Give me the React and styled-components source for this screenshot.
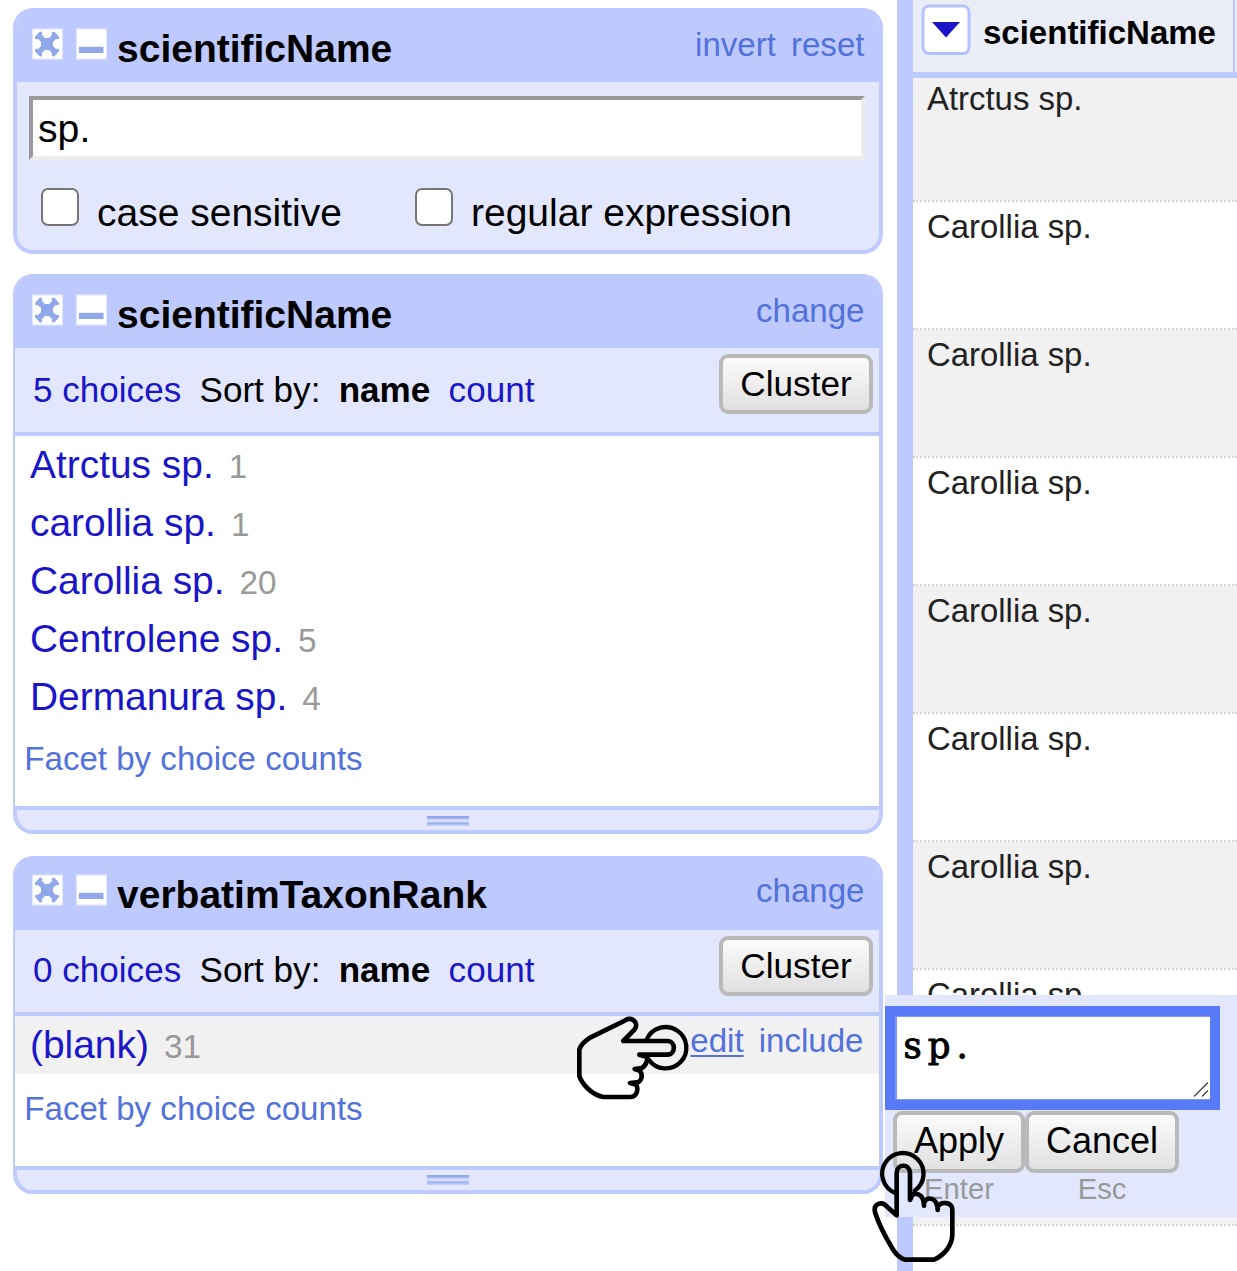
import React from "react";
import styled, { createGlobalStyle } from "styled-components";

const c = {
  frame: "#bec9fe",
  pale: "#e2e7fe",
  link: "#1a16c8",
  soft: "#5272da",
  stripe: "#f1f1f1",
};

const GlobalStyle = createGlobalStyle`
  * { box-sizing: border-box; }
  html, body { margin: 0; padding: 0; background: #fff; }
  body { font-family: "Liberation Sans", Arial, sans-serif; color: #000; overflow: hidden; }
`;

const Page = styled.div`
  position: relative;
  display: flex;
  width: 1237px;
  height: 1271px;
  overflow: hidden;
  white-space: nowrap;
`;

const Sidebar = styled.aside`
  flex: none;
  width: 897px;
  padding: 8px 0 0 13px;
  display: flex;
  flex-direction: column;
`;

const Panel = styled.section`
  width: 870px;
  height: ${(p) => p.$height}px;
  margin-bottom: ${(p) => p.$gap}px;
  display: flex;
  flex-direction: column;
  border: solid ${c.frame};
  border-width: 0 4px 4px ${(p) => (p.$list ? 2 : 4)}px;
  border-radius: 20px;
  background: ${c.pale};
  overflow: hidden;
`;

const PanelHeader = styled.header`
  flex: none;
  height: 74px;
  padding: 0 14.5px 0 ${(p) => (p.$list ? 17 : 15)}px;
  margin-top: ${(p) => -p.$lift}px;
  border-bottom: 0 solid ${c.frame};
  border-bottom-width: ${(p) => p.$lift}px;
  box-sizing: content-box;
  background: ${c.frame};
  display: flex;
  align-items: flex-start;
`;

const HeaderIcon = styled.svg`
  width: 32px;
  height: 32px;
  margin: 20px 12px 0 0;
  flex: none;
`;

const Title = styled.h2`
  margin: 0 auto 0 -3px;
  font-size: 39px;
  font-weight: bold;
  line-height: 81px;
`;

const SoftLink = styled.a`
  color: ${c.soft};
  font-size: 33.1px;
  line-height: ${(p) => p.$line || 73}px;
  margin-left: 15px;
  text-decoration: ${(p) => (p.$underline ? "underline" : "none")};
  text-decoration-thickness: 2px;
  text-underline-offset: 3px;
`;

const SearchBody = styled.div`
  padding: 14px 14px 0 12px;
`;

const SearchInput = styled.input`
  display: block;
  width: 836px;
  height: 64px;
  padding: 1px 5px 0;
  border: 4px solid;
  border-color: #999 #ececec #ececec #999;
  border-radius: 0;
  outline: none;
  background: #fff;
  font: 39.2px "Liberation Sans", Arial, sans-serif;
`;

const Options = styled.div`
  display: grid;
  grid-template-columns: 374px auto;
  padding: 24px 0 0 12px;
`;

const Option = styled.label`
  display: flex;
  align-items: flex-start;
  gap: 18px;
  font-size: 39px;
  line-height: 57px;
`;

const Check = styled.input`
  appearance: none;
  width: 38px;
  height: 38px;
  margin: 4px 0 0;
  border: 2px solid #767676;
  border-radius: 7px;
  background: #fff;
`;

const Summary = styled.div`
  flex: none;
  height: ${(p) => p.$height}px;
  border-bottom: 4px solid ${c.frame};
  padding: 0 6px 0 18px;
  display: flex;
  align-items: flex-start;
  gap: 18.3px;
  font-size: 35.1px;
  line-height: ${(p) => p.$line}px;
`;

const BlueLink = styled.a`
  color: ${c.link};
`;

const Choices = styled.div`
  flex: 1;
  background: #fff;
`;

const Choice = styled.div`
  height: 58px;
  padding: 0 15.5px 0 15px;
  display: flex;
  align-items: baseline;
  line-height: 57px;
  font-size: 38.9px;
  background: ${(p) => (p.$hover ? c.stripe : "transparent")};
`;

const Count = styled.span`
  margin: 0 auto 0 15px;
  font-size: 33.3px;
  color: #999;
`;

const ChoiceActions = styled.span`
  align-self: flex-start;
  display: flex;
`;

const FacetLink = styled.a`
  display: block;
  padding-left: 9.3px;
  color: ${c.soft};
  font-size: 33.1px;
  line-height: ${(p) => p.$line}px;
`;

const GripBar = styled.div`
  flex: none;
  height: 24px;
  border-top: 4px solid ${c.frame};
  border-left: 2px solid ${c.frame};
  border-bottom-left-radius: 18px;
  background: ${c.pale};
  padding: ${(p) => p.$top}px 0 0 410px;
`;

const Grip = styled.div`
  width: 42px;
  height: 10px;
  background: linear-gradient(#90a8ec 0 2px, #b6c4f5 3px, #d9e0fc 4px, #d2dafa 6px, #90a8ec 7px, #a9baf2 8px, #cdd8fb 10px);
`;

const Button = styled.button`
  flex: none;
  width: ${(p) => p.$width}px;
  height: ${(p) => p.$height}px;
  margin: ${(p) => p.$margin || "0"};
  padding: 0 0 ${(p) => p.$raise || 0}px;
  border: 4px solid #b9b9b9;
  border-radius: 9px;
  background: linear-gradient(#fbfbfb, #e0e0e0);
  color: #000;
  font: ${(p) => p.$size || 36}px "Liberation Sans", Arial, sans-serif;
  line-height: 52px;
  text-align: center;
`;

const Divider = styled.div`
  flex: none;
  width: 16px;
  background: ${c.frame};
`;

const Grid = styled.main`
  flex: 1;
  min-width: 0;
`;

const GridHeader = styled.div`
  height: 78px;
  border-bottom: 6px solid ${c.frame};
  background: #eaedf6;
  display: flex;
`;

const ColumnHeader = styled.div`
  width: 322px;
  padding-left: 8px;
  border-right: 2px solid ${c.frame};
  display: flex;
  gap: 12px;
  font-size: 33px;
  font-weight: bold;
  line-height: 65px;
`;

const MenuIcon = styled.svg`
  width: 50px;
  height: 52px;
  margin-top: 4px;
`;

const GridRow = styled.div`
  height: ${(p) => (p.$first ? 124 : 128)}px;
  border-bottom: 2px dotted #d3d3d3;
  padding-left: 14px;
  background: ${(p) => (p.$odd ? c.stripe : "#fff")};
  background-clip: padding-box;
  color: #222;
  font-size: 32.9px;
  line-height: ${(p) => (p.$first ? 41 : 49)}px;
`;

const EditPopup = styled.div`
  position: absolute;
  left: 885px;
  top: 995px;
  width: 352px;
  height: 222px;
  padding-top: 11px;
  background: ${c.pale};
`;

const EditField = styled.div`
  width: 335px;
  height: 104px;
  padding: 10px;
  background: #587af7;
  display: flex;
`;

const EditText = styled.div`
  flex: 1;
  border: 1px solid #7d98f9;
  border-left-width: 2px;
  border-right: 0;
  background: #fff;
  padding: 0 0 0 6.5px;
  display: flex;
  align-items: flex-end;
  font-family: "DejaVu Serif", "Liberation Mono", monospace;
  font-size: 35.5px;
  letter-spacing: 6px;
  line-height: 58px;
  -webkit-text-stroke: 1px #000;
`;

const EditValue = styled.span`
  align-self: flex-start;
  margin-right: auto;
`;

const ResizeHandle = styled.svg`
  width: 17px;
  height: 17px;
  flex: none;
`;

const EditButtons = styled.div`
  display: flex;
  padding: 1px 0 0 8px;
`;

const KeyedButton = styled.div`
  display: flex;
  flex-direction: column;
  align-items: center;
`;

const KeyHint = styled.span`
  color: #999;
  font-size: 29.2px;
  line-height: 33px;
`;

const Pointer = styled.svg`
  position: absolute;
  left: ${(p) => p.$x}px;
  top: ${(p) => p.$y}px;
  fill: none;
  stroke: #000;
  stroke-width: 14;
  stroke-linejoin: round;
  stroke-linecap: round;
`;

function RemoveIcon() {
  return (
    <HeaderIcon viewBox="0 0 32 32">
      <rect x="0" y="0.5" width="31" height="31" fill="#e0e7ff" />
      <rect x="1" y="1.5" width="29" height="29" fill="#fff" />
      <path d="M7 8L23 24M23 8L7 24" stroke="#90a8ea" strokeWidth="5.6" />
      <path d="M4.6 9.6L8.6 5.2M21.4 5.2L25.4 9.6M4.6 22.4L8.6 26.8M21.4 26.8L25.4 22.4" stroke="#90a8ea" strokeWidth="3.4" strokeLinecap="round" />
      <rect x="9" y="10" width="12" height="12" rx="1.5" fill="#90a8ea" />
    </HeaderIcon>
  );
}

function MinimizeIcon() {
  return (
    <HeaderIcon viewBox="0 0 32 32">
      <rect x="0" y="0.5" width="31" height="31" fill="#e0e7ff" />
      <rect x="1" y="1.5" width="29" height="29" fill="#fff" />
      <rect x="3" y="18.8" width="24.5" height="6.2" fill="#90a8ea" />
    </HeaderIcon>
  );
}

function Header({ title, links, list, lift = 0 }) {
  return (
    <PanelHeader $list={list} $lift={lift}>
      <RemoveIcon />
      <MinimizeIcon />
      <Title>{title}</Title>
      {links.map((l) => (
        <SoftLink key={l}>{l}</SoftLink>
      ))}
    </PanelHeader>
  );
}

function ListFacet({ title, height, gap, lift, summaryHeight, summaryLine, total, choices, facetLine, gripTop }) {
  return (
    <Panel $list $height={height} $gap={gap}>
      <Header title={title} links={["change"]} list lift={lift} />
      <Summary $height={summaryHeight} $line={summaryLine}>
        <BlueLink>{total} choices</BlueLink>
        <span>Sort by:</span>
        <b>name</b>
        <BlueLink>count</BlueLink>
        <Button $width={154} $height={60} $size={35.2} $margin="6px 0 0 auto">Cluster</Button>
      </Summary>
      <Choices>
        {choices.map(([name, count, hover]) => (
          <Choice key={name} $hover={hover}>
            <BlueLink>{name}</BlueLink>
            <Count>{count}</Count>
            {hover && (
              <ChoiceActions>
                <SoftLink $line={49} $underline>edit</SoftLink>
                <SoftLink $line={49}>include</SoftLink>
              </ChoiceActions>
            )}
          </Choice>
        ))}
        <FacetLink $line={facetLine}>Facet by choice counts</FacetLink>
      </Choices>
      <GripBar $top={gripTop}>
        <Grip />
      </GripBar>
    </Panel>
  );
}

const rows = ["Atrctus sp.", ...Array(7).fill("Carollia sp."), "", ""];

export default function App() {
  return (
    <Page>
      <GlobalStyle />
      <Sidebar>
        <Panel $height={246} $gap={20}>
          <Header title="scientificName" links={["invert", "reset"]} />
          <SearchBody>
            <SearchInput defaultValue="sp." />
            <Options>
              <Option><Check type="checkbox" />case sensitive</Option>
              <Option><Check type="checkbox" />regular expression</Option>
            </Options>
          </SearchBody>
        </Panel>
        <ListFacet
          title="scientificName"
          height={560}
          gap={22}
          lift={0}
          summaryHeight={88}
          summaryLine={83}
          total={5}
          choices={[
            ["Atrctus sp.", 1],
            ["carollia sp.", 1],
            ["Carollia sp.", 20],
            ["Centrolene sp.", 5],
            ["Dermanura sp.", 4],
          ]}
          facetLine={65}
          gripTop={6}
        />
        <ListFacet
          title="verbatimTaxonRank"
          height={338}
          gap={0}
          lift={2}
          summaryHeight={86}
          summaryLine={79}
          total={0}
          choices={[["(blank)", 31, true]]}
          facetLine={69}
          gripTop={5}
        />
      </Sidebar>
      <Divider />
      <Grid>
        <GridHeader>
          <ColumnHeader>
            <MenuIcon viewBox="0 0 50 52">
              <rect x="2" y="2" width="46" height="47.5" rx="6" fill="#fff" stroke="#b5c1fc" strokeWidth="3" />
              <path d="M11 18H39L25 33.5Z" fill="#1a16c8" />
            </MenuIcon>
            scientificName
          </ColumnHeader>
        </GridHeader>
        {rows.map((name, i) => (
          <GridRow key={i} $first={i === 0} $odd={i % 2 === 0}>{name}</GridRow>
        ))}
      </Grid>
      <EditPopup>
        <EditField>
          <EditText>
            <EditValue>sp.</EditValue>
            <ResizeHandle viewBox="0 0 17 17" stroke="#444" strokeWidth="1.3">
              <path d="M1 14.5L15 0.5M9 14.5L15 8.5" />
            </ResizeHandle>
          </EditText>
        </EditField>
        <EditButtons>
          <KeyedButton>
            <Button $width={132} $height={62} $raise={2}>Apply</Button>
            <KeyHint>Enter</KeyHint>
          </KeyedButton>
          <KeyedButton>
            <Button $width={154} $height={62} $raise={2}>Cancel</Button>
            <KeyHint>Esc</KeyHint>
          </KeyedButton>
        </EditButtons>
      </EditPopup>
      <Pointer $x={570} $y={1008} width="125" height="100" viewBox="0 0 375 300">
        <path d="M160 99H292C318 99 318 140 292 140H208L232 147C232 162 225 174 216 180L194 183L210 188C219 202 215 216 206 222L180 225L199 230C206 246 200 267 180 267H100C62 260 35 225 28 204V124C34 108 46 98 62 88L160 40C186 22 208 44 194 64Z" />
        <path d="M230 95A62 62 0 1 1 236.5 155" strokeWidth="13" />
      </Pointer>
      <Pointer $x={866} $y={1145} width="100" height="124" viewBox="0 0 300 372">
        <path d="M92 211V84C92 55 132 55 132 84V165L140 148C158 142 174 154 174 182V174C182 152 214 156 215 195V186C224 168 259 170 259 194V268C259 300 236 330 204 344H118C100 340 90 328 80 312C58 276 38 236 27 202C21 176 48 166 64 186Z" />
        <path d="M86 143A62 62 0 1 1 146 137" strokeWidth="13" />
      </Pointer>
    </Page>
  );
}
